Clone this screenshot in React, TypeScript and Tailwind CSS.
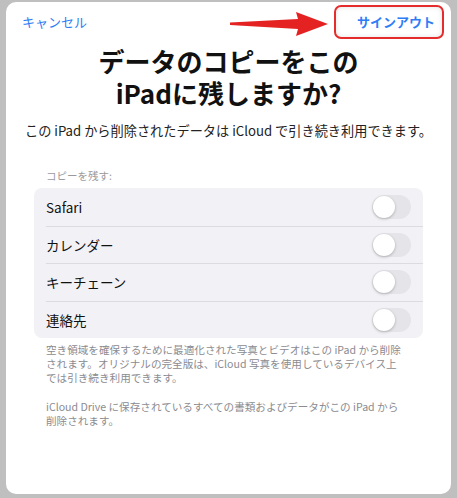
const rows = ['Safari', 'カレンダー', 'キーチェーン', '連絡先'];

function Toggle() {
  return (
    <div className="w-[39px] h-[24px] rounded-full bg-[#e4e4e9] flex items-center px-[1px]">
      <div className="w-[22px] h-[22px] rounded-full bg-white shadow-[0_1px_3px_rgba(0,0,0,0.25)]" />
    </div>
  );
}

export default function App() {
  return (
    <div
      className="w-[457px] h-[498px] bg-[#bfbfbf] pt-[2px] pl-[6px] overflow-hidden"
      style={{ fontFamily: '"Noto Sans CJK JP", "Noto Sans", sans-serif' }}
    >
      <div className="relative w-[445px] h-[492px] bg-white rounded-[10px] flex flex-col">
        {/* header */}
        <div className="h-[40px] flex items-center justify-between pl-[16px] pr-[7px]">
          <span className="text-[13px] leading-[18px] text-[#2f7df6]">キャンセル</span>
          <div className="h-[34px] w-[110px] border-2 border-[#e52b2b] rounded-[7px] flex items-center justify-end pr-[7px] shadow-[inset_0_0_5px_rgba(0,0,0,0.12)]">
            <span className="text-[13px] leading-[18px] font-semibold text-[#2f7df6]">サインアウト</span>
          </div>
        </div>

        {/* red arrow */}
        <svg className="absolute left-[224px] top-[10px]" width="98" height="24" viewBox="0 0 98 24">
          <polygon points="0,10.5 68,7 66,0 98,12 66,24 68,17 0,13" fill="#e52222" />
        </svg>

        {/* title */}
        <div className="mt-[3px] text-center text-[26px] font-bold text-[#111]">
          <div className="leading-[32px]">データのコピーをこの</div>
          <div className="leading-[32px]">iPadに残しますか?</div>
        </div>

        <p className="mt-[12px] text-center text-[13.2px] leading-[20px] text-[#222] whitespace-nowrap">
          この iPad から削除されたデータは iCloud で引き続き利用できます。
        </p>

        <div className="mx-[28px] mt-[28px]">
          <div className="pl-[12px] text-[10.5px] leading-[14px] text-[#9a9a9e]">コピーを残す:</div>

          <div className="mt-[5px] bg-[#f2f2f6] rounded-[8px]">
            {rows.map((r, i) => (
              <div key={r} className="pl-[12px]">
                <div
                  className={`h-[37.5px] flex items-center justify-between pr-[12px] ${
                    i > 0 ? 'border-t border-[#dcdce0]' : ''
                  }`}
                >
                  <span className="text-[13.5px] text-[#111]">{r}</span>
                  <Toggle />
                </div>
              </div>
            ))}
          </div>

          <div className="px-[12px] mt-[5px] text-[10.6px] leading-[14px] text-[#8b8b90] whitespace-nowrap">
            <p>
              空き領域を確保するために最適化された写真とビデオはこの iPad から削除
              <br />
              されます。オリジナルの完全版は、iCloud 写真を使用しているデバイス上
              <br />
              では引き続き利用できます。
            </p>
            <p className="mt-[15px]">
              iCloud Drive に保存されているすべての書類およびデータがこの iPad から
              <br />
              削除されます。
            </p>
          </div>
        </div>
      </div>
    </div>
  );
}
